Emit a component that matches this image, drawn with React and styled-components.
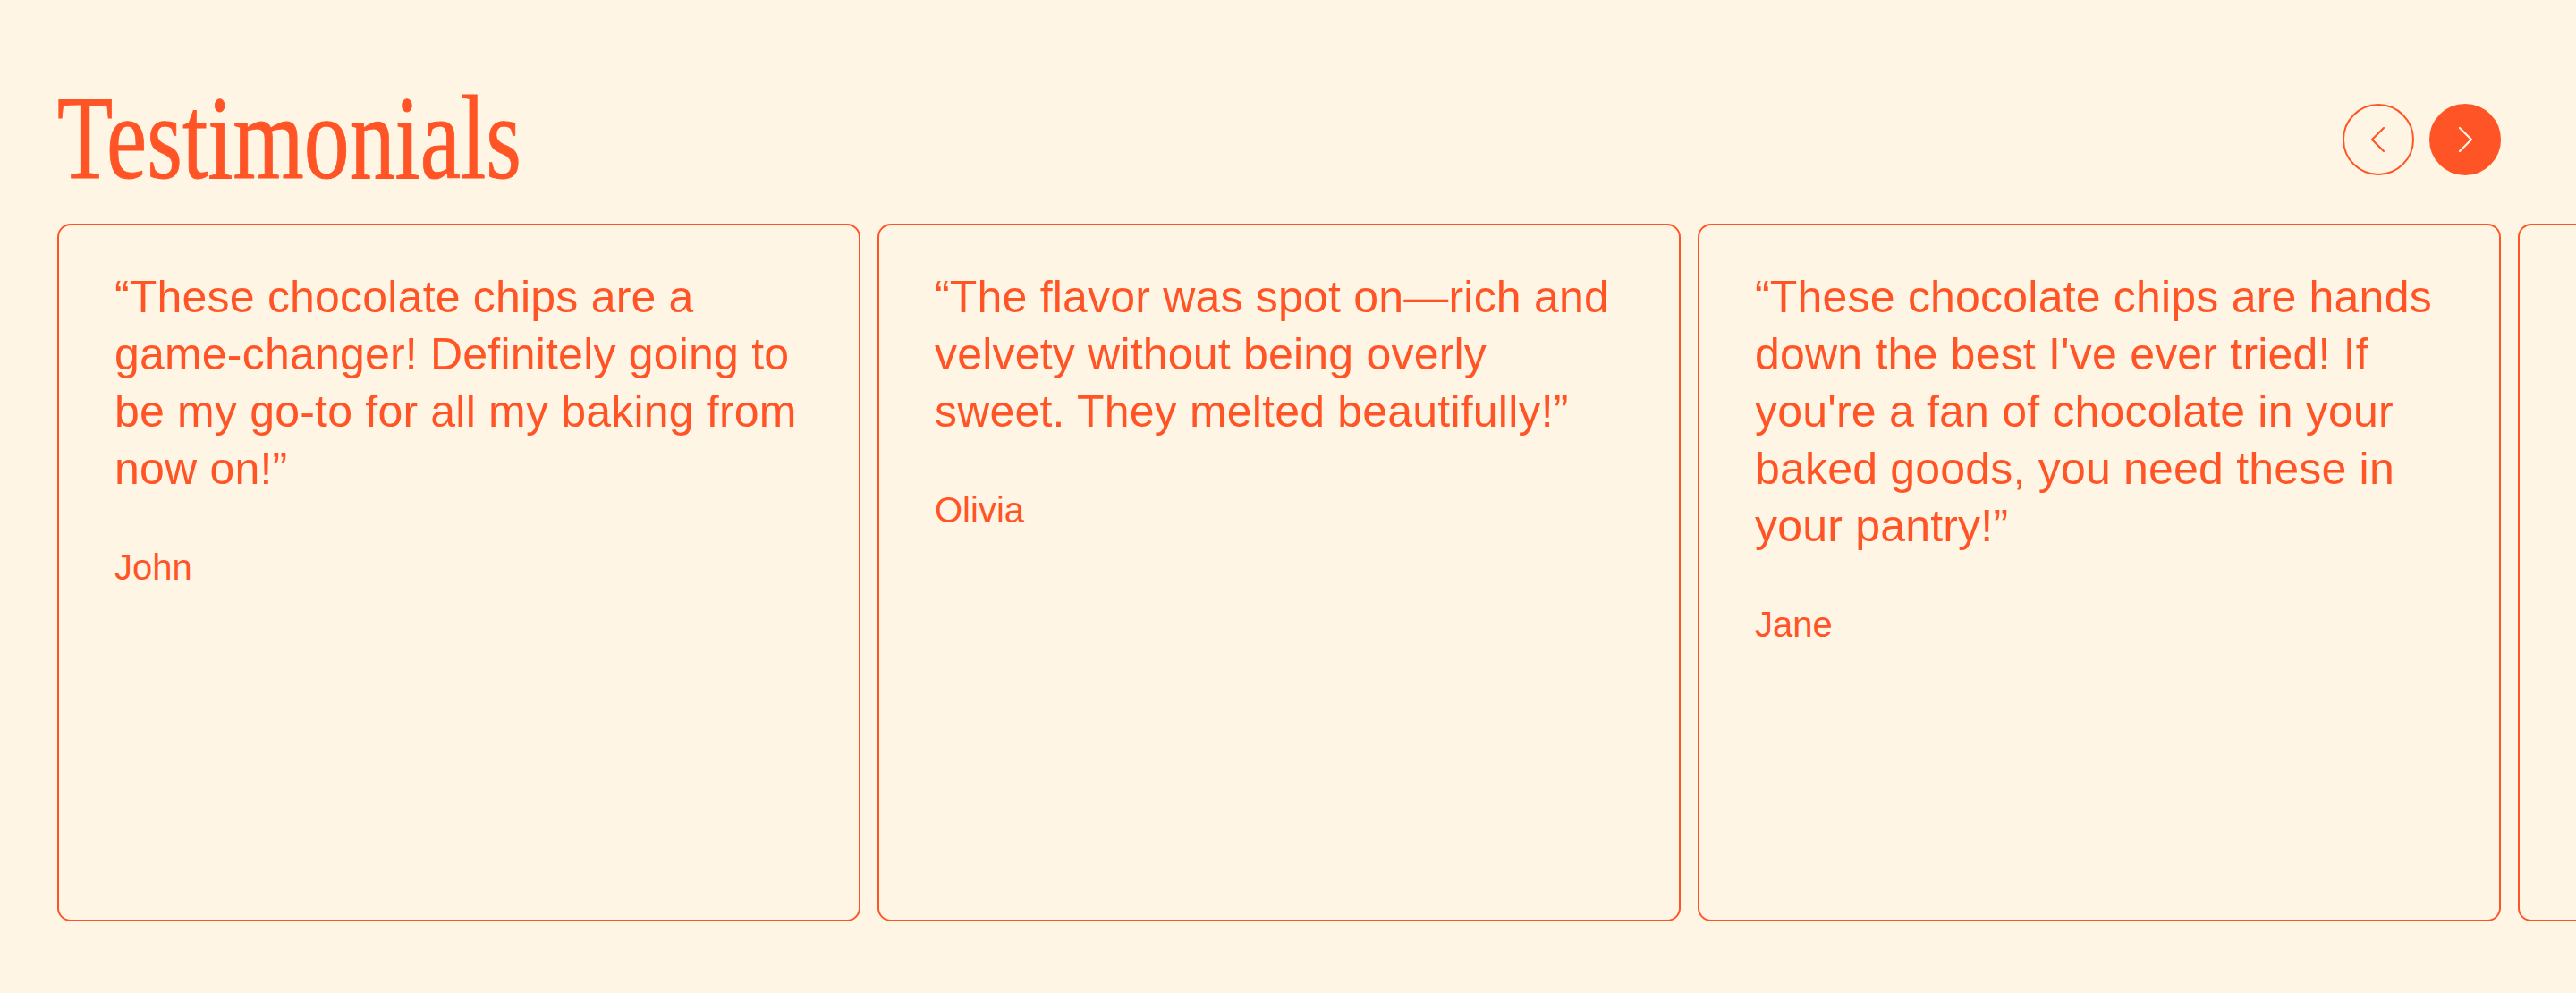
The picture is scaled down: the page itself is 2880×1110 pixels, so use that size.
import React from "react";
import styled, { createGlobalStyle } from "styled-components";

const orange = "#ff5526";
const cream = "#fff5e4";

const GlobalStyle = createGlobalStyle`
  html, body {
    margin: 0;
    background: ${cream};
    overflow: hidden;
  }
  * {
    box-sizing: border-box;
  }
`;

const Section = styled.section`
  height: 1110px;
  padding: 87px 84px 0 64px;
  background: ${cream};
  color: ${orange};
  overflow: hidden;
`;

const Header = styled.div`
  display: flex;
  justify-content: space-between;
  align-items: center;
  margin-bottom: 29px;
`;

const Title = styled.h2`
  margin: 0;
  font-family: "Liberation Serif", "Times New Roman", serif;
  font-weight: 400;
  font-size: 134px;
  line-height: 134px;
  white-space: nowrap;
  -webkit-text-stroke: 1px ${orange};
  transform: scaleX(0.76);
  transform-origin: left center;
`;

const Controls = styled.div`
  display: flex;
  gap: 17px;
  margin-top: 4px;
`;

const ArrowButton = styled.button`
  width: 80px;
  height: 80px;
  border-radius: 50%;
  border: 2px solid ${orange};
  background: ${(p) => (p.$filled ? orange : "transparent")};
  color: ${(p) => (p.$filled ? cream : orange)};
  display: flex;
  align-items: center;
  justify-content: center;
  padding: 0;
  cursor: pointer;
`;

const Track = styled.div`
  display: flex;
  gap: 19px;
`;

const Card = styled.article`
  flex: 0 0 898px;
  height: 780px;
  border: 2px solid ${orange};
  border-radius: 15px;
  padding: 48px 62px;
  font-family: "Liberation Sans", Arial, sans-serif;
`;

const Quote = styled.p`
  margin: 0;
  font-size: 50px;
  line-height: 64px;
  letter-spacing: 0.2px;
`;

const Name = styled.p`
  margin: 50px 0 0;
  font-size: 40px;
  line-height: 56px;
`;

const Chevron = ({ dir }) => (
  <svg width="20" height="32" viewBox="0 0 20 32" fill="none">
    <polyline
      points={dir === "left" ? "16,3 3,16 16,29" : "4,3 17,16 4,29"}
      stroke="currentColor"
      strokeWidth="2.2"
      strokeLinecap="round"
      strokeLinejoin="round"
    />
  </svg>
);

const testimonials = [
  {
    quote:
      "\u201CThese chocolate chips are a game-changer! Definitely going to be my go-to for all my baking from now on!\u201D",
    name: "John",
  },
  {
    quote:
      "\u201CThe flavor was spot on\u2014rich and velvety without being overly sweet. They melted beautifully!\u201D",
    name: "Olivia",
  },
  {
    quote:
      "\u201CThese chocolate chips are hands down the best I've ever tried! If you're a fan of chocolate in your baked goods, you need these in your pantry!\u201D",
    name: "Jane",
  },
];

const App = () => {
  return (
    <>
      <GlobalStyle />
      <Section>
        <Header>
          <Title>Testimonials</Title>
          <Controls>
            <ArrowButton aria-label="Previous">
              <Chevron dir="left" />
            </ArrowButton>
            <ArrowButton $filled aria-label="Next">
              <Chevron dir="right" />
            </ArrowButton>
          </Controls>
        </Header>
        <Track>
          {testimonials.map((t) => (
            <Card key={t.name}>
              <Quote>{t.quote}</Quote>
              <Name>{t.name}</Name>
            </Card>
          ))}
          <Card aria-hidden="true" />
        </Track>
      </Section>
    </>
  );
};

export default App;
